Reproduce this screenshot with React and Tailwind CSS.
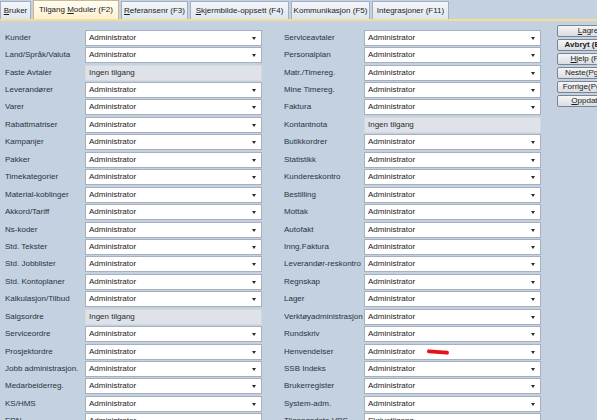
import React from 'react';

const tabs = [
    { pre: '', key: 'B', post: 'ruker', w: 'w-[31px]' },
    { pre: 'Tilgang ', key: 'M', post: 'oduler (F2)', w: 'w-[86px]', active: true },
    { pre: '', key: 'R', post: 'eferansenr (F3)', w: 'w-[67px]' },
    { pre: '', key: 'S', post: 'kjermbilde-oppsett (F4)', w: 'w-[99px]' },
    { pre: 'Kommunikasjon (F5)', key: '', post: '', w: 'w-[79px]' },
    { pre: 'Integrasjoner (F11)', key: '', post: '', w: 'w-[77px]' },
];

const left = [
    ['Kunder'], ['Land/Språk/Valuta'], ['Faste Avtaler', 'off'], ['Leverandører'], ['Varer'],
    ['Rabattmatriser'], ['Kampanjer'], ['Pakker'], ['Timekategorier'], ['Material-koblinger'],
    ['Akkord/Tariff'], ['Ns-koder'], ['Std. Tekster'], ['Std. Jobblister'], ['Std. Kontoplaner'],
    ['Kalkulasjon/Tilbud'], ['Salgsordre', 'off'], ['Serviceordre'], ['Prosjektordre'],
    ['Jobb administrasjon.'], ['Medarbeiderreg.'], ['KS/HMS'], ['EPN'],
];

const right = [
    ['Serviceavtaler'], ['Personalplan'], ['Matr./Timereg.'], ['Mine Timereg.'], ['Faktura'],
    ['Kontantnota', 'off'], ['Butikkordrer'], ['Statistikk'], ['Kundereskontro'], ['Bestilling'],
    ['Mottak'], ['Autofakt'], ['Inng.Faktura'], ['Leverandør-reskontro'], ['Regnskap'], ['Lager'],
    ['Verktøyadministrasjon'], ['Rundskriv'], ['Henvendelser', 'mark'], ['SSB Indeks'],
    ['Brukerregister'], ['System-adm.'], ['Tilgangsdata VPS', 'skriv'],
];

const buttons = [
    { pre: '', key: 'L', post: 'agre' },
    { pre: 'Avbryt (Esc)', key: '', post: '', bold: true },
    { pre: '', key: 'H', post: 'jelp (F1)' },
    { pre: 'Neste(PgDn)', key: '', post: '' },
    { pre: 'Forrige(PgUp)', key: '', post: '' },
    { pre: '', key: 'O', post: 'ppdater' },
];

// text with an underlined access key, kept in one inline box so spaces survive
const Mnemonic = ({ pre, k, post }) => (
    <span className="whitespace-pre">
        {pre}
        {k && <span className="underline">{k}</span>}
        {post}
    </span>
);

const Field = ({ label, kind }) => (
    <div className="flex items-center h-[17.45px]">
        <div className="w-[80px] shrink-0 text-[#2a3442] whitespace-nowrap overflow-hidden">{label}</div>
        {kind === 'off' ? (
            <div className="w-[177px] h-[16px] flex items-center px-[3px] bg-[#dfe3e9] border border-[#d3d9e0] text-[#2b2b2b]">
                Ingen tilgang
            </div>
        ) : (
            <div className="relative w-[177px] h-[16px] flex items-center px-[3px] bg-white border border-[#a7b1bd] text-[#1b1b1b]">
                {kind === 'skriv' ? 'Skrivetilgang' : 'Administrator'}
                {kind === 'mark' && (
                    <span className="absolute left-[62px] top-[5px] w-[22px] h-[4px] rounded-full bg-[#e8101a] rotate-[4deg]" />
                )}
                <span className="absolute right-[5px] top-[6px] w-0 h-0 border-l-[2.5px] border-r-[2.5px] border-t-[3px] border-l-transparent border-r-transparent border-t-[#2a2a2a]" />
            </div>
        )}
    </div>
);

export default function App() {
    return (
        <div className="w-[597px] h-[420px] overflow-hidden bg-[#c3d1e0] text-[8px] leading-none" style={{ fontFamily: '"Liberation Sans", Arial, sans-serif' }}>
            {/* Tabs */}
            <div className="flex items-end gap-[2px] h-[19px]">
                {tabs.map((t, i) => (
                    <div
                        key={i}
                        className={`${t.w} shrink-0 flex items-center justify-center border border-b-0 whitespace-nowrap text-[#1c1c1c] ${
                            t.active
                                ? 'h-[19px] bg-gradient-to-b from-[#fffdf6] to-[#fdf0cc] border-[#c9b98a]'
                                : 'h-[18px] bg-gradient-to-b from-[#f4f7fa] to-[#dde5ee] border-[#a1afc1]'
                        }`}
                    >
                        <Mnemonic pre={t.pre} k={t.key} post={t.post} />
                    </div>
                ))}
            </div>
            <div className="h-[2px] bg-[#f5dd95]" />

            {/* Body */}
            <div className="flex pt-[8px] pl-[5px]">
                <div className="flex flex-col">
                    {left.map(([l, k], i) => <Field key={i} label={l} kind={k} />)}
                </div>
                <div className="flex flex-col ml-[22px]">
                    {right.map(([l, k], i) => <Field key={i} label={l} kind={k} />)}
                </div>
                <div className="flex flex-col gap-[2px] ml-[16px] -mt-[4px]">
                    {buttons.map((b, i) => (
                        <div
                            key={i}
                            className={`w-[62px] h-[12px] shrink-0 flex items-center justify-center whitespace-nowrap border border-[#7a8594] rounded-[2px] bg-gradient-to-b from-[#f6f6f6] to-[#d9dde2] text-[#1c1c1c] ${b.bold ? 'font-bold' : ''}`}
                        >
                            <Mnemonic pre={b.pre} k={b.key} post={b.post} />
                        </div>
                    ))}
                </div>
            </div>
        </div>
    );
}
